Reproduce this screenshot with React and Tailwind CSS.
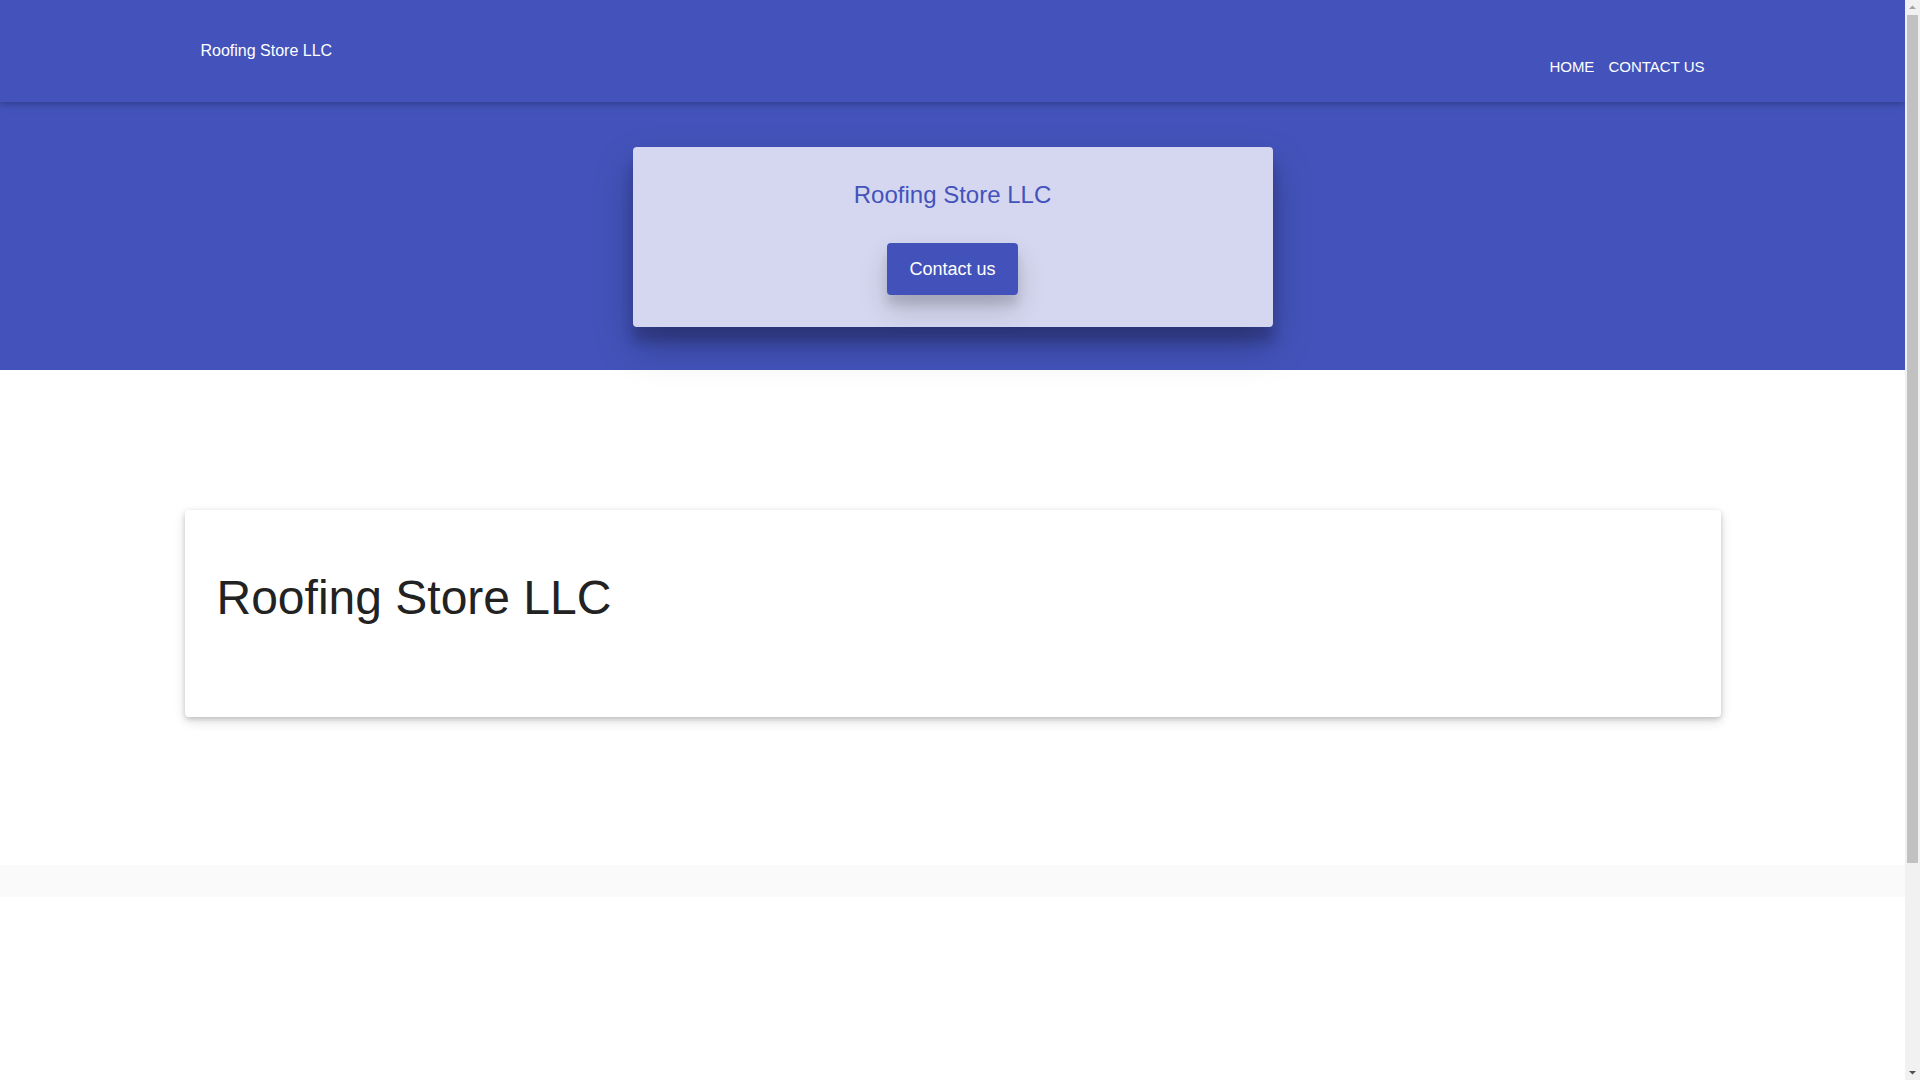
import React from 'react';

function Header() {
  return (
    <header className="relative z-10 h-[102px] bg-[#4353bb] shadow-[0_2px_5px_rgba(0,0,0,0.16),0_2px_10px_rgba(0,0,0,0.12)]">
      <div className="mx-auto flex h-full w-[1536px] items-start justify-between px-4">
        <a href="#" className="mt-[41px] text-[16px] leading-[20px] text-white">Roofing Store LLC</a>
        <nav className="mt-[58px] flex gap-[14px] text-[15px] uppercase leading-[18px] text-white">
          <a href="#">Home</a>
          <a href="#">Contact us</a>
        </nav>
      </div>
    </header>
  );
}

function Hero() {
  return (
    <section className="bg-[#4353bb] pt-[45px] pb-[43px]">
      <div className="relative z-10 mx-auto flex h-[180px] w-[640px] flex-col items-center rounded-[4px] bg-[#d5d7f0] pt-[34px] shadow-[0_19px_38px_rgba(0,0,0,0.25),0_15px_12px_rgba(0,0,0,0.18)]">
        <h2 className="text-[24px] leading-[28px] text-[#4353bb]">Roofing Store LLC</h2>
        <button className="mt-[34px] h-[52px] rounded-[4px] bg-[#4352bb] px-[22px] pt-[1px] text-[18px] text-white shadow-[0_14px_28px_rgba(0,0,0,0.16),0_10px_10px_rgba(0,0,0,0.1)]">
          Contact us
        </button>
      </div>
    </section>
  );
}

// fake classic scrollbar, the page is taller than the window
function Scrollbar() {
  return (
    <div className="flex h-full w-[15px] shrink-0 flex-col items-center bg-[#f1f1f1]">
      <svg width="15" height="15" viewBox="0 0 15 15" className="shrink-0">
        <path d="M4 9 L7.5 5.5 L11 9 Z" fill="#a3a3a3" />
      </svg>
      <div className="h-[848px] w-[11px] bg-[#c1c1c1]"></div>
      <div className="flex-1"></div>
      <svg width="15" height="15" viewBox="0 0 15 15" className="shrink-0">
        <path d="M4 6 L7.5 9.5 L11 6 Z" fill="#505050" />
      </svg>
    </div>
  );
}

export default function App() {
  return (
    <div className="flex h-screen bg-white font-['Liberation_Sans',Arial,sans-serif]">
      <div className="flex-1 overflow-hidden">
        <Header />
        <Hero />
        <main className="pt-[140px] pb-[148px]">
          <div className="mx-auto w-[1536px] rounded-[4px] bg-white px-8 pt-[59px] pb-[90px] shadow-[0_2px_5px_rgba(0,0,0,0.16),0_4px_12px_rgba(0,0,0,0.14)]">
            <h1 className="text-[48px] leading-[58px] text-[#222222]">Roofing Store LLC</h1>
          </div>
        </main>
        <footer className="h-[32px] bg-[#fafafa]"></footer>
      </div>
      <Scrollbar />
    </div>
  );
}
